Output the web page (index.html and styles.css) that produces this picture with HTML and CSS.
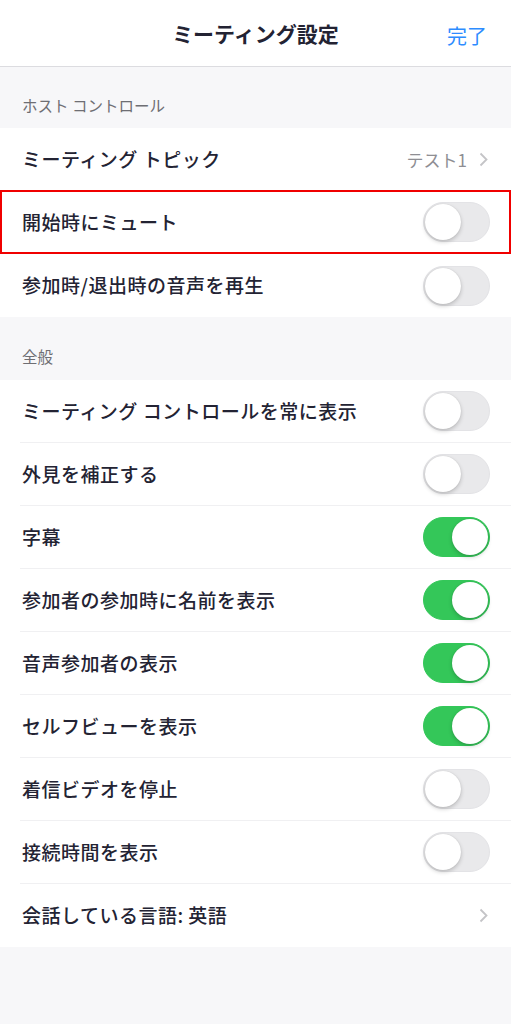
FILE: index.html
```html
<!DOCTYPE html>
<html lang="ja">
<head>
  <meta charset="UTF-8">
  <meta name="viewport" content="width=device-width, initial-scale=1">
  <title>ミーティング設定</title>
  <link rel="stylesheet" href="styles.css">
</head>
<body>
  <header class="nav">
    <h1>ミーティング設定</h1>
    <button class="done">完了</button>
  </header>

  <div class="section-title first">ホスト コントロール</div>
  <ul class="list">
    <li class="row">
      <span class="label">ミーティング トピック</span>
      <span class="value">テスト1</span>
      <svg class="chev" width="9" height="15" viewBox="0 0 9 15"><path d="M1.5 1.5 7.5 7.5 1.5 13.5" fill="none" stroke="#c4c4c7" stroke-width="1.8"/></svg>
    </li>
    <li class="row marked">
      <span class="label">開始時にミュート</span>
      <span class="switch"></span>
    </li>
    <li class="row">
      <span class="label">参加時/退出時の音声を再生</span>
      <span class="switch"></span>
    </li>
  </ul>

  <div class="section-title">全般</div>
  <ul class="list">
    <li class="row"><span class="label">ミーティング コントロールを常に表示</span><span class="switch"></span></li>
    <li class="row"><span class="label">外見を補正する</span><span class="switch"></span></li>
    <li class="row"><span class="label">字幕</span><span class="switch on"></span></li>
    <li class="row"><span class="label">参加者の参加時に名前を表示</span><span class="switch on"></span></li>
    <li class="row"><span class="label">音声参加者の表示</span><span class="switch on"></span></li>
    <li class="row"><span class="label">セルフビューを表示</span><span class="switch on"></span></li>
    <li class="row"><span class="label">着信ビデオを停止</span><span class="switch"></span></li>
    <li class="row"><span class="label">接続時間を表示</span><span class="switch"></span></li>
    <li class="row">
      <span class="label">会話している言語: 英語</span>
      <svg class="chev" width="9" height="15" viewBox="0 0 9 15"><path d="M1.5 1.5 7.5 7.5 1.5 13.5" fill="none" stroke="#c4c4c7" stroke-width="1.8"/></svg>
    </li>
  </ul>
</body>
</html>
```

FILE: styles.css
```css
body { margin: 0; background: #f7f7f9; font-family: "Noto Sans CJK JP", "Noto Sans", sans-serif; color: #232333; min-height: 1024px; }

.nav { height: 66px; background: #fff; border-bottom: 1px solid #dcdce0; display: flex; align-items: center; justify-content: center; position: relative; }
.nav h1 { margin: 0; font-size: 21px; font-weight: 700; color: #232333; }
.done { position: absolute; right: 24px; top: 21px; border: 0; background: none; padding: 0; font: inherit; font-size: 20px; color: #2d8cff; }

.section-title { height: 63px; box-sizing: border-box; padding: 14px 22px 0; display: flex; align-items: center; font-size: 15.5px; color: #6e6e73; }
.section-title.first { height: 61px; padding-top: 14px; }

.list { list-style: none; margin: 0; padding: 0 0 0 20px; background: #fff; }
.row { height: 63px; box-sizing: border-box; display: flex; align-items: center; padding-right: 21px; border-bottom: 1px solid #f0f0f2; }
.row:last-child { border-bottom: 0; }
.label { flex: 1; padding-left: 2px; padding-bottom: 2px; font-size: 19px; font-weight: 500; letter-spacing: 0.5px; }
.value { font-size: 17px; color: #8e8e93; margin-right: 12px; }
.chev { margin-right: 2px; }

.marked { position: relative; border-bottom-color: transparent; }
.marked::after { content: ""; position: absolute; left: -20px; right: 0; top: -1px; bottom: -1px; border: 2px solid #f00000; }

.switch { width: 67px; height: 40px; border-radius: 20px; background: #e9e9eb; box-sizing: border-box; border: 1px solid #e3e3e6; position: relative; }
.switch::after { content: ""; position: absolute; left: 1px; top: 1px; width: 36px; height: 36px; border-radius: 50%; background: #fff; box-shadow: 0 2px 4px rgba(0,0,0,0.2), 0 0 1px rgba(0,0,0,0.15); }
.switch.on { background: #34c759; border-color: #34c759; }
.switch.on::after { left: auto; right: 1px; }
```
